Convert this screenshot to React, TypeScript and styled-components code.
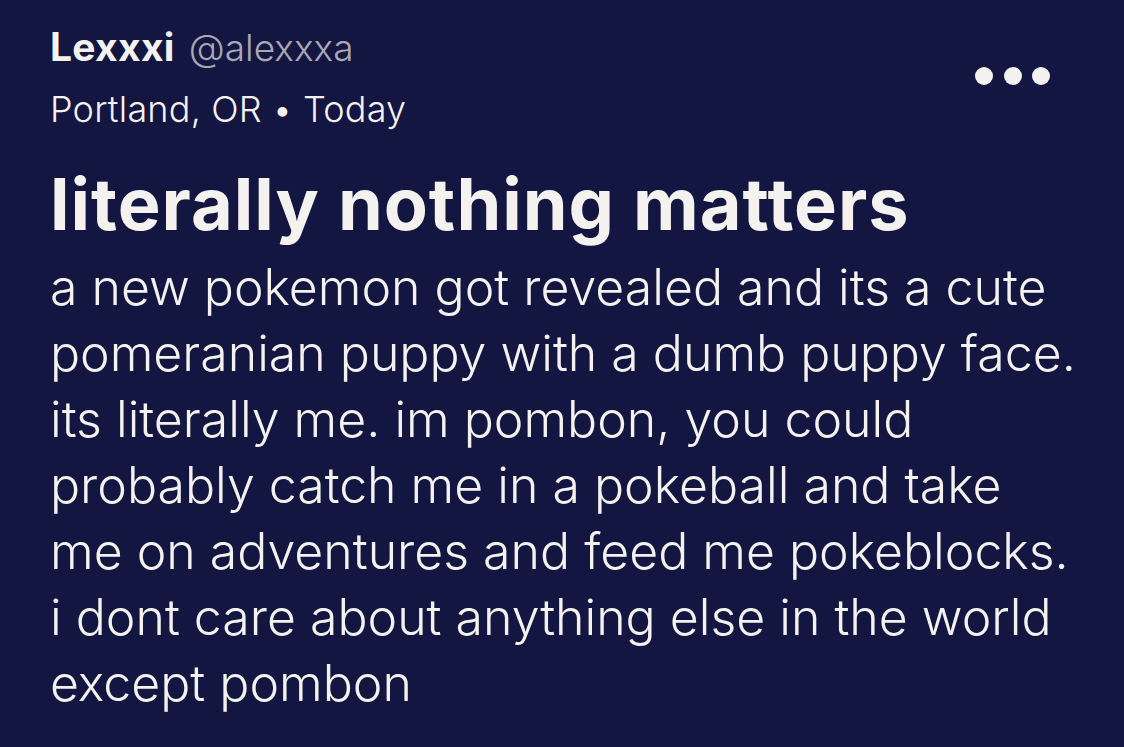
import styled, { createGlobalStyle } from "styled-components";

const GlobalStyle = createGlobalStyle`
  html, body {
    margin: 0;
    padding: 0;
    background: #131641;
  }
`;

const text = "#f4f2ee";
const muted = "#a9a8b3";

const Page = styled.div`
  box-sizing: border-box;
  width: 1124px;
  height: 747px;
  overflow: hidden;
  background: #131641;
  padding: 22px 50px 0 50px;
  font-family: Inter, "Noto Sans", sans-serif;
  color: ${text};
`;

const Header = styled.div`
  display: flex;
  flex-direction: row;
  justify-content: space-between;
  align-items: flex-start;
`;

const Meta = styled.div`
  display: flex;
  flex-direction: column;
`;

const NameRow = styled.div`
  line-height: 50px;
  white-space: nowrap;
`;

const Name = styled.span`
  font-size: 39px;
  font-weight: 700;
  letter-spacing: 0.3px;
  color: ${text};
`;

const Handle = styled.span`
  font-size: 37px;
  font-weight: 300;
  color: ${muted};
  margin-left: 14px;
`;

const Location = styled.div`
  font-size: 36px;
  font-weight: 300;
  line-height: 58px;
  letter-spacing: 0.2px;
  white-space: nowrap;
`;

const More = styled.div`
  display: flex;
  flex-direction: row;
  gap: 10.5px;
  margin-top: 45px;
  margin-right: 24px;
`;

const Dot = styled.span`
  width: 18px;
  height: 18px;
  border-radius: 50%;
  background: ${text};
`;

const Title = styled.h1`
  margin: 26px 0 0 0;
  font-size: 72px;
  font-weight: 700;
  letter-spacing: 1px;
  line-height: 80px;
  white-space: nowrap;
`;

const Body = styled.div`
  margin-top: 10px;
  font-size: 50px;
  font-weight: 300;
  line-height: 66px;
`;

const Line = styled.div`
  white-space: nowrap;
`;

const lines = [
  "a new pokemon got revealed and its a cute",
  "pomeranian puppy with a dumb puppy face.",
  "its literally me. im pombon, you could",
  "probably catch me in a pokeball and take",
  "me on adventures and feed me pokeblocks.",
  "i dont care about anything else in the world",
  "except pombon",
];

export default function App() {
  return (
    <>
      <GlobalStyle />
      <Page>
        <Header>
          <Meta>
            <NameRow>
              <Name>Lexxxi</Name>
              <Handle>@alexxxa</Handle>
            </NameRow>
            <Location>Portland, OR • Today</Location>
          </Meta>
          <More>
            <Dot />
            <Dot />
            <Dot />
          </More>
        </Header>
        <Title>literally nothing matters</Title>
        <Body>
          {lines.map((line) => (
            <Line key={line}>{line}</Line>
          ))}
        </Body>
      </Page>
    </>
  );
}
